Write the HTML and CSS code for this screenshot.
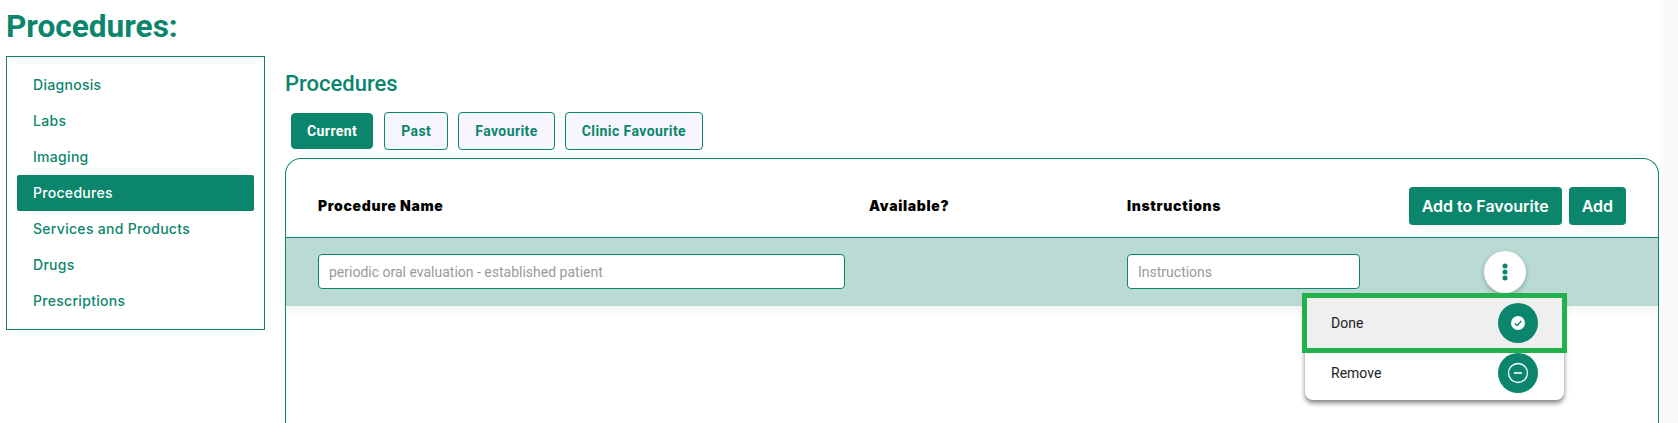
FILE: index.html
```html
<!DOCTYPE html>
<html lang="en">
<head>
    <meta charset="UTF-8">
    <title>Procedures</title>
    <link rel="stylesheet" href="styles.css">
</head>
<body>
    <h1 class="page-title">Procedures:</h1>
    <div class="layout">
        <nav class="side-nav">
            <a class="nav-item">Diagnosis</a>
            <a class="nav-item">Labs</a>
            <a class="nav-item">Imaging</a>
            <a class="nav-item active">Procedures</a>
            <a class="nav-item">Services and Products</a>
            <a class="nav-item">Drugs</a>
            <a class="nav-item">Prescriptions</a>
        </nav>
        <main class="content">
            <h2 class="section-title">Procedures</h2>
            <div class="tabs">
                <button class="tab active">Current</button>
                <button class="tab">Past</button>
                <button class="tab">Favourite</button>
                <button class="tab">Clinic Favourite</button>
            </div>
            <section class="card">
                <div class="row head-row">
                    <div class="col-name head-label">Procedure Name</div>
                    <div class="col-avail head-label">Available?</div>
                    <div class="col-instr head-label">Instructions</div>
                    <div class="col-actions">
                        <button class="btn">Add to Favourite</button>
                        <button class="btn">Add</button>
                    </div>
                </div>
                <div class="row item-row">
                    <div class="col-name"><input class="field" placeholder="periodic oral evaluation - established patient"></div>
                    <div class="col-avail"></div>
                    <div class="col-instr"><input class="field" placeholder="Instructions"></div>
                    <div class="col-actions">
                        <button class="kebab">
                            <svg width="6" height="18" viewBox="0 0 6 18"><circle cx="3" cy="3" r="2.5"/><circle cx="3" cy="9" r="2.5"/><circle cx="3" cy="15" r="2.5"/></svg>
                        </button>
                    </div>
                </div>
                <div class="menu">
                    <div class="menu-item selected">
                        <span>Done</span>
                        <span class="round-icon">
                            <svg width="16" height="16" viewBox="0 0 16 16"><circle cx="8" cy="8" r="7" fill="#fff"/><path d="M4.8 8.2l2.3 2.2 4.2-4.4" fill="none" stroke="#0b866c" stroke-width="1.4"/></svg>
                        </span>
                    </div>
                    <div class="menu-item">
                        <span>Remove</span>
                        <span class="round-icon">
                            <svg width="22" height="22" viewBox="0 0 22 22"><circle cx="11" cy="11" r="9.5" fill="none" stroke="#fff" stroke-width="1.3"/><path d="M7 11h8" stroke="#fff" stroke-width="1.6"/></svg>
                        </span>
                    </div>
                </div>
            </section>
        </main>
    </div>
</body>
</html>
```

FILE: styles.css
```css
:root {
    --green: #0b866c;
    --row-bg: #b9dbd4;
}
body {
    margin: 0;
    height: 423px;
    box-sizing: border-box;
    overflow: hidden;
    background: #fff;
    border-right: 18px solid #fafafa;
    color: var(--green);
    font-family: 'Roboto', Arial, sans-serif;
}
.page-title {
    margin: 0;
    padding: 9px 0 0 6px;
    height: 47px;
    box-sizing: border-box;
    font-size: 31.6px;
    line-height: 36px;
    font-weight: 700;
}
.layout {
    display: flex;
    align-items: flex-start;
    padding: 0 1px 0 6px;
    margin-top: 9px;
}
.side-nav {
    width: 259px;
    height: 274px;
    box-sizing: border-box;
    flex: none;
    border: 1px solid var(--green);
    padding: 10px;
    display: flex;
    flex-direction: column;
}
.nav-item {
    height: 36px;
    line-height: 36px;
    padding-left: 16px;
    font-family: 'Inter', Arial, sans-serif;
    font-size: 14px;
    font-weight: 500;
    letter-spacing: 0.3px;
    border-radius: 2px;
}
.nav-item.active {
    background: var(--green);
    color: #fff;
}
.content {
    flex: 1;
    margin-left: 20px;
    min-width: 0;
}
.section-title {
    margin: 13px 0 0;
    font-size: 22px;
    line-height: 30px;
    font-weight: 500;
}
.tabs {
    display: flex;
    align-items: center;
    gap: 10px;
    margin: 13px 0 8px 6px;
    height: 38px;
}
.tab {
    height: 38px;
    padding: 0 16px;
    border: 1px solid var(--green);
    border-radius: 4px;
    background: #f7f5fe;
    color: var(--green);
    font-family: 'Roboto', Arial, sans-serif;
    font-size: 14px;
    font-weight: 700;
    letter-spacing: 0.42px;
}
.tab.active {
    height: 36px;
    padding: 0 15px;
    margin-right: 1px;
    background: var(--green);
    color: #fff;
}
.card {
    position: relative;
    height: 265px;
    border: 1px solid var(--green);
    border-radius: 16px 16px 0 0;
    border-bottom: none;
}
.row {
    display: flex;
    align-items: center;
    padding-left: 32px;
}
.head-row {
    height: 78px;
    border-bottom: 1px solid var(--green);
    color: #000;
    font-family: 'Inter', Arial, sans-serif;
    font-size: 14px;
    font-weight: 900;
    letter-spacing: 0.65px;
}
.head-label { margin-top: 15px; }
.item-row {
    height: 68px;
    background: var(--row-bg);
    box-shadow: 0 4px 8px rgba(0, 0, 0, 0.06);
}
.col-name { width: 527px; flex: none; }
.col-avail { width: 282px; margin-left: 24px; flex: none; }
.col-instr { width: 233px; margin-left: -24px; flex: none; }
.col-actions {
    flex: 1;
    display: flex;
    justify-content: flex-end;
    gap: 7px;
    padding-right: 32px;
    letter-spacing: 0;
}
.head-row .col-actions { margin-top: 16px; }
.item-row .col-actions { justify-content: flex-start; padding-left: 124px; }
.btn {
    height: 38px;
    padding: 0 13px;
    border: none;
    border-radius: 4px;
    background: var(--green);
    color: #fff;
    font-family: 'Inter', Arial, sans-serif;
    font-size: 16px;
    font-weight: 600;
}
.field {
    display: block;
    width: 100%;
    height: 35px;
    margin-bottom: 1px;
    box-sizing: border-box;
    padding: 0 10px;
    border: 1px solid var(--green);
    border-radius: 4px;
    background: #fff;
    font-family: 'Roboto', Arial, sans-serif;
    font-size: 14px;
    outline: none;
}
.field::placeholder { color: #9a9a9a; }
.kebab {
    width: 42px;
    height: 42px;
    padding: 0;
    border: none;
    border-radius: 50%;
    background: #fff;
    box-shadow: 0 2px 5px rgba(0, 0, 0, 0.25);
    display: flex;
    align-items: center;
    justify-content: center;
    fill: var(--green);
}
.menu {
    position: absolute;
    top: 139px;
    right: 94px;
    width: 259px;
    padding-bottom: 2px;
    background: #fff;
    border-radius: 0 0 8px 8px;
    box-shadow: 0 3px 5px rgba(0, 0, 0, 0.5);
}
.menu-item {
    height: 50px;
    display: flex;
    align-items: center;
    justify-content: space-between;
    padding: 0 26px;
    color: #222;
    font-size: 14px;
}
.menu-item.selected {
    background: #efefef;
    outline: 5px solid #22b14c;
    position: relative;
    margin: 0 2px;
    padding: 0 24px;
}
.round-icon {
    width: 40px;
    height: 40px;
    border-radius: 50%;
    background: var(--green);
    display: flex;
    align-items: center;
    justify-content: center;
}
```
